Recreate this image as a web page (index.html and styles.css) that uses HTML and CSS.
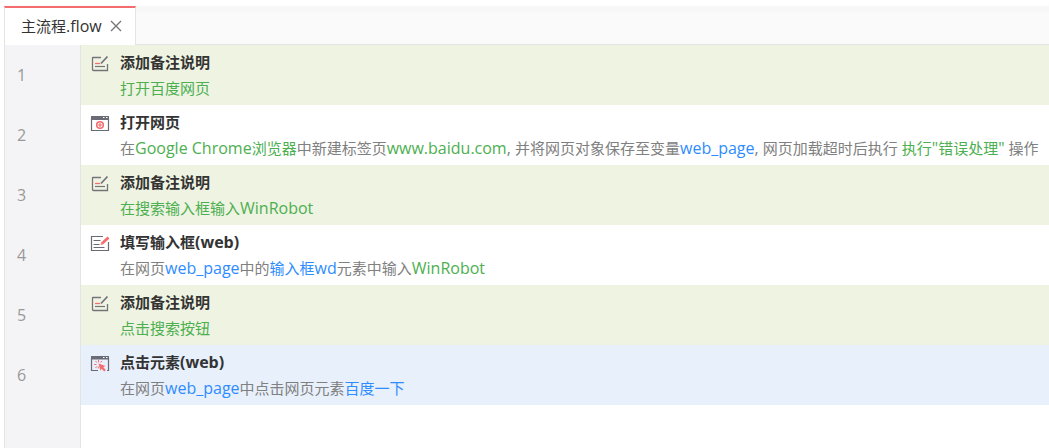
FILE: index.html
```
<!DOCTYPE html>
<html lang="zh-CN">
<head>
    <meta charset="UTF-8">
    <meta name="viewport" content="width=device-width, initial-scale=1.0">
    <title>主流程.flow</title>
    <link rel="stylesheet" href="styles.css">
</head>
<body>
    <header class="tabs">
        <div class="tab">
            <button class="tab-name" type="button">主流程<span class="latin">.flow</span></button>
            <button class="tab-close" type="button" aria-label="关闭">
                <svg width="12" height="12" viewBox="0 0 12 12"><path d="M1 1l10 10M11 1L1 11" stroke="#777" stroke-width="1.4"/></svg>
            </button>
        </div>
    </header>
    <main class="editor">
        <div class="gutter">
            <div class="line">1</div>
            <div class="line">2</div>
            <div class="line">3</div>
            <div class="line">4</div>
            <div class="line">5</div>
            <div class="line">6</div>
        </div>
        <div class="steps">
            <div class="step note">
                <svg class="icon" viewBox="0 0 20 18"><use href="#icon-note"/></svg>
                <div class="step-text">
                    <h2>添加备注说明</h2>
                    <p><span class="value">打开百度网页</span></p>
                </div>
            </div>
            <div class="step">
                <svg class="icon" viewBox="0 0 20 18">
                    <path d="M1.500 3v12.500h17V3" fill="none" stroke="#6b6b75" stroke-width="1.2"/>
                    <path d="M1 1h18v4H1z" fill="#6b6b75"/>
                    <path d="M13 2.500h1.500M16 2.500h1.500" stroke="#fff" stroke-width="1.2"/>
                    <circle cx="10" cy="10" r="3.300" fill="#fff" stroke="#f56c6c" stroke-width="1.6"/>
                    <path d="M10 8v4M8 10h4" stroke="#f56c6c" stroke-width="1.2"/>
                </svg>
                <div class="step-text">
                    <h2>打开网页</h2>
                    <p>在<span class="value"><span class="latin">Google Chrome</span>浏览器</span>中新建标签页<span class="value latin">www.baidu.com</span><span class="latin">, </span>并将网页对象保存至变量<span class="variable latin">web_page</span><span class="latin">, </span>网页加载超时后执行 <span class="value">执行<span class="latin">"</span>错误处理<span class="latin">"</span></span> 操作</p>
                </div>
            </div>
            <div class="step note">
                <svg class="icon" viewBox="0 0 20 18"><use href="#icon-note"/></svg>
                <div class="step-text">
                    <h2>添加备注说明</h2>
                    <p><span class="value">在搜索输入框输入<span class="latin">WinRobot</span></span></p>
                </div>
            </div>
            <div class="step">
                <svg class="icon" viewBox="0 0 20 18">
                    <path d="M13 1.500H1.500v14h17V7" fill="none" stroke="#6b6b75" stroke-width="1.2"/>
                    <path d="M3.500 5.500h7M3.500 9.500h6M3.500 12.500h11" stroke="#6b6b75" stroke-width="1.2"/>
                    <path d="M12 8.500l6.500-6" stroke="#f56c6c" stroke-width="2.800"/>
                    <path d="M10.500 10l.5-2.200 1.800 1.800z" fill="#f56c6c"/>
                </svg>
                <div class="step-text">
                    <h2>填写输入框<span class="latin">(web)</span></h2>
                    <p>在网页<span class="variable latin">web_page</span>中的<span class="variable">输入框<span class="latin">wd</span></span>元素中输入<span class="value latin">WinRobot</span></p>
                </div>
            </div>
            <div class="step note">
                <svg class="icon" viewBox="0 0 20 18"><use href="#icon-note"/></svg>
                <div class="step-text">
                    <h2>添加备注说明</h2>
                    <p><span class="value">点击搜索按钮</span></p>
                </div>
            </div>
            <div class="step selected">
                <svg class="icon" viewBox="0 0 20 18">
                    <path d="M8 15.500H1.500V3M18.500 3v12.500h-1.500" fill="none" stroke="#6b6b75" stroke-width="1.2"/>
                    <path d="M1 1h18v3.500H1z" fill="#6b6b75"/>
                    <path d="M13 2.500h1.500M16 2.500h1.500" stroke="#fff" stroke-width="1.2"/>
                    <path d="M8.500 5v2.300M5.500 6l1.400 1.600M4.200 9.500h2.300M5.500 13l1.400-1.600M8.300 13.500v-2M12 6l-1.500 1.600" stroke="#f56c6c" stroke-width="1"/>
                    <path d="M8.500 8.500l7 2.500-2.200 1.200 2.500 2.800-1.600 1.500-2.500-2.800-1.200 2z" fill="#f56c6c"/>
                </svg>
                <div class="step-text">
                    <h2>点击元素<span class="latin">(web)</span></h2>
                    <p>在网页<span class="variable latin">web_page</span>中点击网页元素<span class="variable">百度一下</span></p>
                </div>
            </div>
        </div>
    </main>

    <!-- shared icon for note steps -->
    <svg width="0" height="0" class="sprite">
        <symbol id="icon-note" viewBox="0 0 20 18">
            <path d="M11 2.500H3q-.5 0-.5.500v11.500q0 1 1 1h14V9" fill="none" stroke="#74747a" stroke-width="1.300"/>
            <path d="M5 8.500h5" stroke="#f56c6c" stroke-width="1.300"/>
            <path d="M5 11.500h10" stroke="#74747a" stroke-width="1.200"/>
            <path d="M11 8.500l6.500-7" stroke="#74747a" stroke-width="1.800"/>
        </symbol>
    </svg>
</body>
</html>
```
FILE: styles.css
```
* {
    box-sizing: border-box;
}
body {
    display: flex;
    flex-direction: column;
    min-height: 100vh;
    margin: 0;
    padding-left: 4px;
    font-family: "Open Sans", "Noto Sans CJK SC", sans-serif;
    font-size: 15px;
    color: #333;
    background-color: #fff;
}
/* latin runs look small next to the chinese text */
.latin {
    font-size: 16px;
    line-height: 1;
}
.tabs {
    display: flex;
    height: 45px;
    padding-top: 6px;
    border-bottom: 1px solid #e4e4e6;
    background: linear-gradient(#fff 4px, #f6f6f6 8px, #fafafa 14px);
}
.tab {
    display: flex;
    align-items: center;
    gap: 8px;
    height: 39px;
    padding: 0 13px 2px 16px;
    border: 1px solid #e4e4e6;
    border-top: 2px solid #f56c6c;
    border-bottom: none;
    background-color: #fff;
}
.tab button {
    padding: 0;
    border: none;
    font: inherit;
    color: inherit;
    background: none;
    cursor: pointer;
}
.tab .tab-close {
    display: flex;
}
.editor {
    display: flex;
    flex: 1;
}
.gutter {
    flex: none;
    width: 77px;
    border: solid #e4e4e6;
    border-width: 0 1px;
    font-size: 16px;
    color: #999;
    background-color: #f4f4f6;
}
.line {
    height: 60px;
    padding-left: 12px;
    line-height: 60px;
}
.steps {
    flex: 1;
    min-width: 0;
}
.step {
    display: flex;
    gap: 10px;
    min-height: 60px;
    padding: 4px 0 4px 9px;
}
.note {
    background-color: #eff3e2;
}
.selected {
    background-color: #e8f0fc;
}
.icon {
    flex: none;
    width: 20px;
    height: 18px;
    margin-top: 6px;
}
.step-text {
    line-height: 26px;
    white-space: nowrap;
}
.step h2 {
    margin: 0;
    font-size: 15px;
    font-weight: bold;
}
.step p {
    margin: 0;
    color: #808080;
}
.step .value {
    color: #4caf50;
}
.step .variable {
    color: #2e8cff;
}
.sprite {
    position: absolute;
}
```
